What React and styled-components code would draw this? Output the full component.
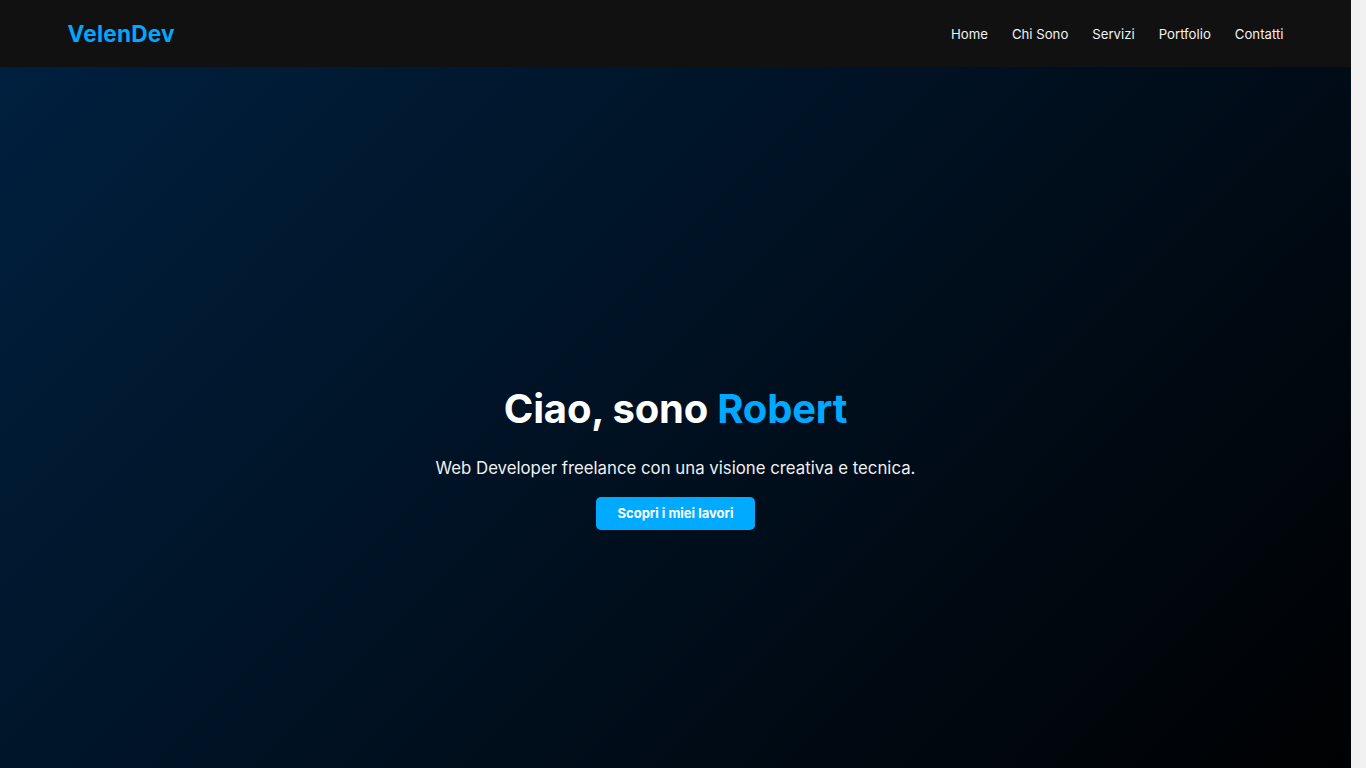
import React from 'react';
import styled, { createGlobalStyle } from 'styled-components';

const GlobalStyle = createGlobalStyle`
  * {
    box-sizing: border-box;
  }
  html {
    background: #f1f1f1;
  }
  body {
    margin: 0 15px 0 0;
    background: #000;
    color: #fff;
    font-family: "Inter", "Open Sans", sans-serif;
  }
  a {
    text-decoration: none;
    color: inherit;
  }
`;

const Header = styled.header`
  height: 67px;
  display: flex;
  align-items: center;
  justify-content: space-between;
  padding: 0 5%;
  background: #111111;
`;

const Logo = styled.div`
  font-size: 22.6px;
  font-weight: 700;
  color: #00a8ff;
  letter-spacing: 0.2px;
`;

const Nav = styled.nav`
  display: flex;
  gap: 24px;
`;

const NavLink = styled.a`
  font-size: 13.2px;
  color: #f2f2f2;
`;

const Hero = styled.section`
  min-height: 100vh;
  display: flex;
  flex-direction: column;
  align-items: center;
  justify-content: center;
  text-align: center;
  padding-top: 12px;
  background: linear-gradient(135deg, #00203f 0%, #000000 100%);
`;

const Title = styled.h1`
  margin: 0 0 25px;
  font-size: 40px;
  font-weight: 700;
  letter-spacing: -0.2px;
`;

const Accent = styled.span`
  color: #00a8ff;
`;

const Subtitle = styled.p`
  margin: 0 0 19px;
  font-size: 16.8px;
  color: #f0f0f0;
`;

const Button = styled.a`
  display: inline-block;
  padding: 8px 22px;
  border-radius: 5px;
  background: #00aaff;
  color: #fff;
  font-size: 13px;
  line-height: 17px;
  font-weight: 700;
`;

const links = ['Home', 'Chi Sono', 'Servizi', 'Portfolio', 'Contatti'];

export default function App() {
  return (
    <>
      <GlobalStyle />
      <Header>
        <Logo>VelenDev</Logo>
        <Nav>
          {links.map(l => (
            <NavLink key={l} href={`#${l}`}>{l}</NavLink>
          ))}
        </Nav>
      </Header>
      <Hero>
        <Title>
          Ciao, sono <Accent>Robert</Accent>
        </Title>
        <Subtitle>Web Developer freelance con una visione creativa e tecnica.</Subtitle>
        <Button href="#Portfolio">Scopri i miei lavori</Button>
      </Hero>
    </>
  );
}
